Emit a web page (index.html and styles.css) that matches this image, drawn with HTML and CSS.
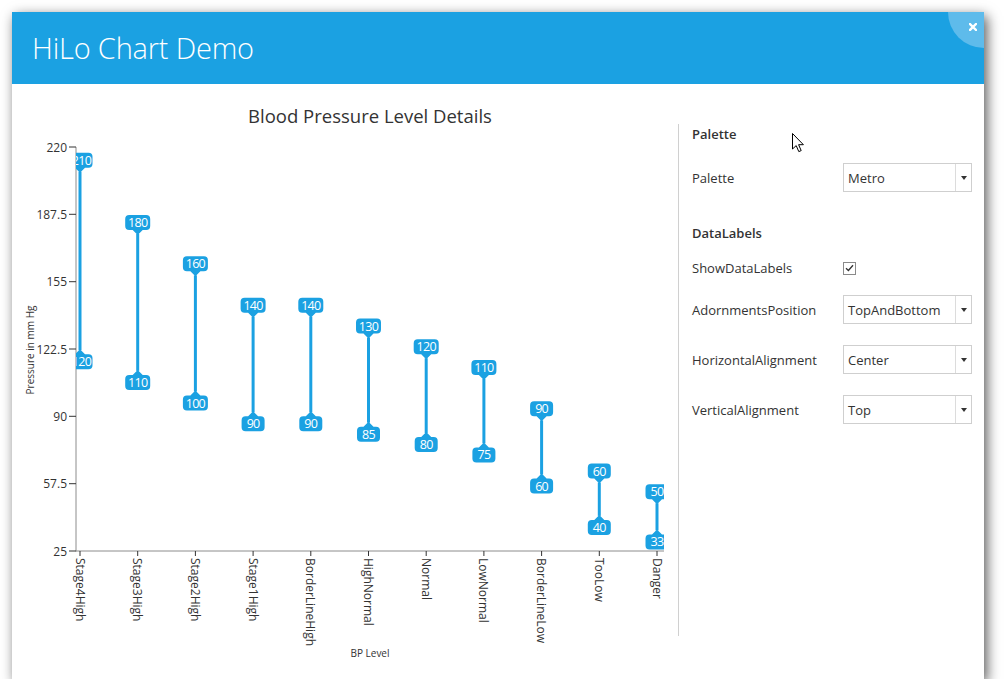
FILE: index.html
```html
<!DOCTYPE html>
<html>
<head>
<meta charset="utf-8">
<title>HiLo Chart Demo</title>
<link rel="stylesheet" href="styles.css">
</head>
<body>
<div class="window">
  <div class="titlebar">
    <h1 class="title">HiLo Chart Demo</h1>
    <div class="close-bg"></div>
    <svg class="close-x" width="8" height="8" viewBox="0 0 8 8"><path d="M1 1 L7 7 M7 1 L1 7" stroke="#fff" stroke-width="2.4" stroke-linecap="square"/></svg>
  </div>
  <div class="content">
    <svg class="chart" width="666" height="595" viewBox="12 84 666 595">
      <defs>
        <clipPath id="plot"><rect x="76" y="84" width="588" height="467"/></clipPath>
        <path id="l3" d="M-8.5,-15 h17 a4,4 0 0 1 4,4 v7 a4,4 0 0 1 -4,4 h-3.5 l-5,5 l-5,-5 h-3.5 a4,4 0 0 1 -4,-4 v-7 a4,4 0 0 1 4,-4 z"/>
        <path id="l2" d="M-7.5,-15 h15 a4,4 0 0 1 4,4 v7 a4,4 0 0 1 -4,4 h-2.5 l-5,5 l-5,-5 h-2.5 a4,4 0 0 1 -4,-4 v-7 a4,4 0 0 1 4,-4 z"/>
      </defs>
      <text class="ctitle" x="370" y="115">Blood Pressure Level Details</text>

      <g class="yaxis">
        <line class="axisline" x1="76" y1="147" x2="76" y2="551.5"/>
        <line class="tick" x1="69" y1="147" x2="76" y2="147"/>
        <line class="tick" x1="69" y1="214.3" x2="76" y2="214.3"/>
        <line class="tick" x1="69" y1="281.7" x2="76" y2="281.7"/>
        <line class="tick" x1="69" y1="349" x2="76" y2="349"/>
        <line class="tick" x1="69" y1="416.3" x2="76" y2="416.3"/>
        <line class="tick" x1="69" y1="483.7" x2="76" y2="483.7"/>
        <line class="tick" x1="69" y1="551" x2="76" y2="551"/>
        <text class="ylab" x="67" y="147">220</text>
        <text class="ylab" x="67" y="214.3">187.5</text>
        <text class="ylab" x="67" y="281.7">155</text>
        <text class="ylab" x="67" y="349">122.5</text>
        <text class="ylab" x="67" y="416.3">90</text>
        <text class="ylab" x="67" y="483.7">57.5</text>
        <text class="ylab" x="67" y="551">25</text>
        <text class="atitle" transform="translate(30,350) rotate(-90)">Pressure in mm Hg</text>
      </g>

      <g class="xaxis">
        <line class="axisline" x1="76" y1="551" x2="664" y2="551"/>
        <line class="tick" x1="80" y1="551" x2="80" y2="556"/>
        <line class="tick" x1="137.7" y1="551" x2="137.7" y2="556"/>
        <line class="tick" x1="195.4" y1="551" x2="195.4" y2="556"/>
        <line class="tick" x1="253.1" y1="551" x2="253.1" y2="556"/>
        <line class="tick" x1="310.8" y1="551" x2="310.8" y2="556"/>
        <line class="tick" x1="368.5" y1="551" x2="368.5" y2="556"/>
        <line class="tick" x1="426.2" y1="551" x2="426.2" y2="556"/>
        <line class="tick" x1="483.9" y1="551" x2="483.9" y2="556"/>
        <line class="tick" x1="541.6" y1="551" x2="541.6" y2="556"/>
        <line class="tick" x1="599.3" y1="551" x2="599.3" y2="556"/>
        <line class="tick" x1="657" y1="551" x2="657" y2="556"/>
        <text class="xlab" transform="translate(80,558) rotate(90)">Stage4High</text>
        <text class="xlab" transform="translate(137.7,558) rotate(90)">Stage3High</text>
        <text class="xlab" transform="translate(195.4,558) rotate(90)">Stage2High</text>
        <text class="xlab" transform="translate(253.1,558) rotate(90)">Stage1High</text>
        <text class="xlab" transform="translate(310.8,558) rotate(90)">BorderLineHigh</text>
        <text class="xlab" transform="translate(368.5,558) rotate(90)">HighNormal</text>
        <text class="xlab" transform="translate(426.2,558) rotate(90)">Normal</text>
        <text class="xlab" transform="translate(483.9,558) rotate(90)">LowNormal</text>
        <text class="xlab" transform="translate(541.6,558) rotate(90)">BorderLineLow</text>
        <text class="xlab" transform="translate(599.3,558) rotate(90)">TooLow</text>
        <text class="xlab" transform="translate(657,558) rotate(90)">Danger</text>
        <text class="atitle" x="370" y="653">BP Level</text>
      </g>

      <g class="series" clip-path="url(#plot)">
        <line class="hilo" x1="80" y1="171.7" x2="80" y2="350.2"/>
        <line class="hilo" x1="137.7" y1="233.9" x2="137.7" y2="370.9"/>
        <line class="hilo" x1="195.4" y1="275.3" x2="195.4" y2="391.6"/>
        <line class="hilo" x1="253.1" y1="316.7" x2="253.1" y2="412.3"/>
        <line class="hilo" x1="310.8" y1="316.7" x2="310.8" y2="412.3"/>
        <line class="hilo" x1="368.5" y1="337.5" x2="368.5" y2="422.7"/>
        <line class="hilo" x1="426.2" y1="358.2" x2="426.2" y2="433.1"/>
        <line class="hilo" x1="483.9" y1="378.9" x2="483.9" y2="443.4"/>
        <line class="hilo" x1="541.6" y1="420.3" x2="541.6" y2="474.5"/>
        <line class="hilo" x1="599.3" y1="482.5" x2="599.3" y2="515.9"/>
        <line class="hilo" x1="657" y1="503.2" x2="657" y2="530.4"/>

        <use href="#l3" class="lbl" transform="translate(80,167.7)"/>
        <text class="dl" x="81.5" y="160.2">210</text>
        <use href="#l3" class="lbl" transform="translate(80,354.2) scale(1,-1)"/>
        <text class="dl" x="81.5" y="361.7">120</text>

        <use href="#l3" class="lbl" transform="translate(137.7,229.9)"/>
        <text class="dl" x="137.7" y="222.4">180</text>
        <use href="#l3" class="lbl" transform="translate(137.7,374.9) scale(1,-1)"/>
        <text class="dl" x="137.7" y="382.4">110</text>

        <use href="#l3" class="lbl" transform="translate(195.4,271.3)"/>
        <text class="dl" x="195.4" y="263.8">160</text>
        <use href="#l3" class="lbl" transform="translate(195.4,395.6) scale(1,-1)"/>
        <text class="dl" x="195.4" y="403.1">100</text>

        <use href="#l3" class="lbl" transform="translate(253.1,312.7)"/>
        <text class="dl" x="253.1" y="305.2">140</text>
        <use href="#l2" class="lbl" transform="translate(253.1,416.3) scale(1,-1)"/>
        <text class="dl" x="253.1" y="423.8">90</text>

        <use href="#l3" class="lbl" transform="translate(310.8,312.7)"/>
        <text class="dl" x="310.8" y="305.2">140</text>
        <use href="#l2" class="lbl" transform="translate(310.8,416.3) scale(1,-1)"/>
        <text class="dl" x="310.8" y="423.8">90</text>

        <use href="#l3" class="lbl" transform="translate(368.5,333.5)"/>
        <text class="dl" x="368.5" y="326">130</text>
        <use href="#l2" class="lbl" transform="translate(368.5,426.7) scale(1,-1)"/>
        <text class="dl" x="368.5" y="434.2">85</text>

        <use href="#l3" class="lbl" transform="translate(426.2,354.2)"/>
        <text class="dl" x="426.2" y="346.7">120</text>
        <use href="#l2" class="lbl" transform="translate(426.2,437.1) scale(1,-1)"/>
        <text class="dl" x="426.2" y="444.6">80</text>

        <use href="#l3" class="lbl" transform="translate(483.9,374.9)"/>
        <text class="dl" x="483.9" y="367.4">110</text>
        <use href="#l2" class="lbl" transform="translate(483.9,447.4) scale(1,-1)"/>
        <text class="dl" x="483.9" y="454.9">75</text>

        <use href="#l2" class="lbl" transform="translate(541.6,416.3)"/>
        <text class="dl" x="541.6" y="408.8">90</text>
        <use href="#l2" class="lbl" transform="translate(541.6,478.5) scale(1,-1)"/>
        <text class="dl" x="541.6" y="486">60</text>

        <use href="#l2" class="lbl" transform="translate(599.3,478.5)"/>
        <text class="dl" x="599.3" y="471">60</text>
        <use href="#l2" class="lbl" transform="translate(599.3,519.9) scale(1,-1)"/>
        <text class="dl" x="599.3" y="527.4">40</text>

        <use href="#l2" class="lbl" transform="translate(657,499.2)"/>
        <text class="dl" x="657" y="491.7">50</text>
        <use href="#l2" class="lbl" transform="translate(657,534.4) scale(1,-1)"/>
        <text class="dl" x="657" y="541.9">33</text>
      </g>
    </svg>

    <div class="panel">
      <div class="heading">Palette</div>
      <div class="row first">
        <span class="label">Palette</span>
        <div class="combo"><span class="value">Metro</span><span class="arrow"></span></div>
      </div>
      <div class="heading second">DataLabels</div>
      <div class="row check-row">
        <span class="label">ShowDataLabels</span>
        <span class="checkbox"><svg width="9" height="8" viewBox="0 0 9 8"><path d="M1 4.2 L3.4 6.5 L8 1.2" fill="none" stroke="#333" stroke-width="1.3"/></svg></span>
      </div>
      <div class="row r1">
        <span class="label">AdornmentsPosition</span>
        <div class="combo"><span class="value">TopAndBottom</span><span class="arrow"></span></div>
      </div>
      <div class="row r2">
        <span class="label">HorizontalAlignment</span>
        <div class="combo"><span class="value">Center</span><span class="arrow"></span></div>
      </div>
      <div class="row r2">
        <span class="label">VerticalAlignment</span>
        <div class="combo"><span class="value">Top</span><span class="arrow"></span></div>
      </div>
    </div>
  </div>
  <svg class="cursor" width="13" height="20" viewBox="0 0 13 20"><path d="M0.5 0.5 L0.5 16 L4.2 12.6 L6.8 18.6 L9.2 17.6 L6.6 11.7 L11.4 11.7 Z" fill="#fff" stroke="#000" stroke-width="1" stroke-linejoin="miter"/></svg>
</div>
</body>
</html>
```
FILE: styles.css
```css
html, body {
  margin: 0;
  padding: 0;
  background: #ffffff;
}
body {
  font-family: "Open Sans", "Noto Sans", sans-serif;
  color: #333;
}
.window {
  position: relative;
  margin: 12px 0 0 12px;
  width: 972px;
  height: 667px;
  background: #fff;
  box-shadow: 3px 4px 12px rgba(0, 0, 0, 0.65);
}
.titlebar {
  position: relative;
  height: 72px;
  background: #1ba1e2;
  overflow: hidden;
  display: flex;
  align-items: center;
  padding-left: 20px;
}
.title {
  margin: 0 0 2px 0;
  font-family: "Open Sans Light", "Open Sans", sans-serif;
  font-weight: 300;
  font-size: 29px;
  color: #fff;
  letter-spacing: -0.2px;
}
.close-bg {
  position: absolute;
  top: -36px;
  right: -36px;
  width: 72px;
  height: 72px;
  border-radius: 50%;
  background: #5ebbeb;
}
.close-x {
  position: absolute;
  top: 11px;
  left: 957px;
}
.content {
  display: flex;
  height: 595px;
}
.chart {
  display: block;
  flex: none;
  font-family: "Open Sans", sans-serif;
}
.ctitle {
  font-size: 18.5px;
  fill: #333;
  text-anchor: middle;
  dominant-baseline: central;
}
.axisline {
  stroke: #8c8c8c;
  stroke-width: 1;
}
.tick {
  stroke: #333;
  stroke-width: 1;
}
.ylab {
  font-size: 12px;
  fill: #333;
  text-anchor: end;
  dominant-baseline: central;
}
.xlab {
  font-size: 12px;
  fill: #333;
  text-anchor: start;
  dominant-baseline: central;
}
.atitle {
  font-size: 10px;
  fill: #333;
  text-anchor: middle;
  dominant-baseline: central;
}
.hilo {
  stroke: #1ba1e2;
  stroke-width: 3;
}
.lbl {
  fill: #1ba1e2;
}
.dl {
  font-size: 12.5px;
  letter-spacing: -0.7px;
  fill: #fff;
  text-anchor: middle;
  dominant-baseline: central;
}
.panel {
  margin-top: 40px;
  height: 512px;
  width: 293px;
  border-left: 1px solid #d0d0d0;
  padding-left: 13px;
  font-size: 13px;
}
.heading {
  height: 20px;
  line-height: 20px;
  font-weight: 600;
  font-size: 13px;
  color: #333;
}
.heading.second {
  margin-top: 31px;
}
.row {
  display: flex;
  align-items: center;
}
.row.first {
  margin-top: 19px;
}
.row.check-row {
  margin-top: 15px;
  height: 20px;
}
.row.r1 {
  margin-top: 17px;
}
.row.r2 {
  margin-top: 21px;
}
.label {
  width: 151px;
  flex: none;
  color: #333;
}
.combo {
  box-sizing: border-box;
  width: 129px;
  height: 29px;
  border: 1px solid #cfcfcf;
  display: flex;
  align-items: center;
  background: #fff;
}
.combo .value {
  flex: 1;
  padding-left: 4px;
  color: #333;
}
.combo .arrow {
  position: relative;
  width: 15px;
  height: 100%;
  border-left: 1px solid #dcdcdc;
}
.combo .arrow::after {
  content: "";
  position: absolute;
  left: 5px;
  top: 12px;
  border-left: 3px solid transparent;
  border-right: 3px solid transparent;
  border-top: 4px solid #333;
}
.checkbox {
  box-sizing: border-box;
  width: 13px;
  height: 13px;
  border: 1px solid #8a8a8a;
  display: flex;
  align-items: center;
  justify-content: center;
  background: #fff;
}
.checkbox svg {
  display: block;
}
.cursor {
  position: absolute;
  left: 780px;
  top: 121px;
}
```
